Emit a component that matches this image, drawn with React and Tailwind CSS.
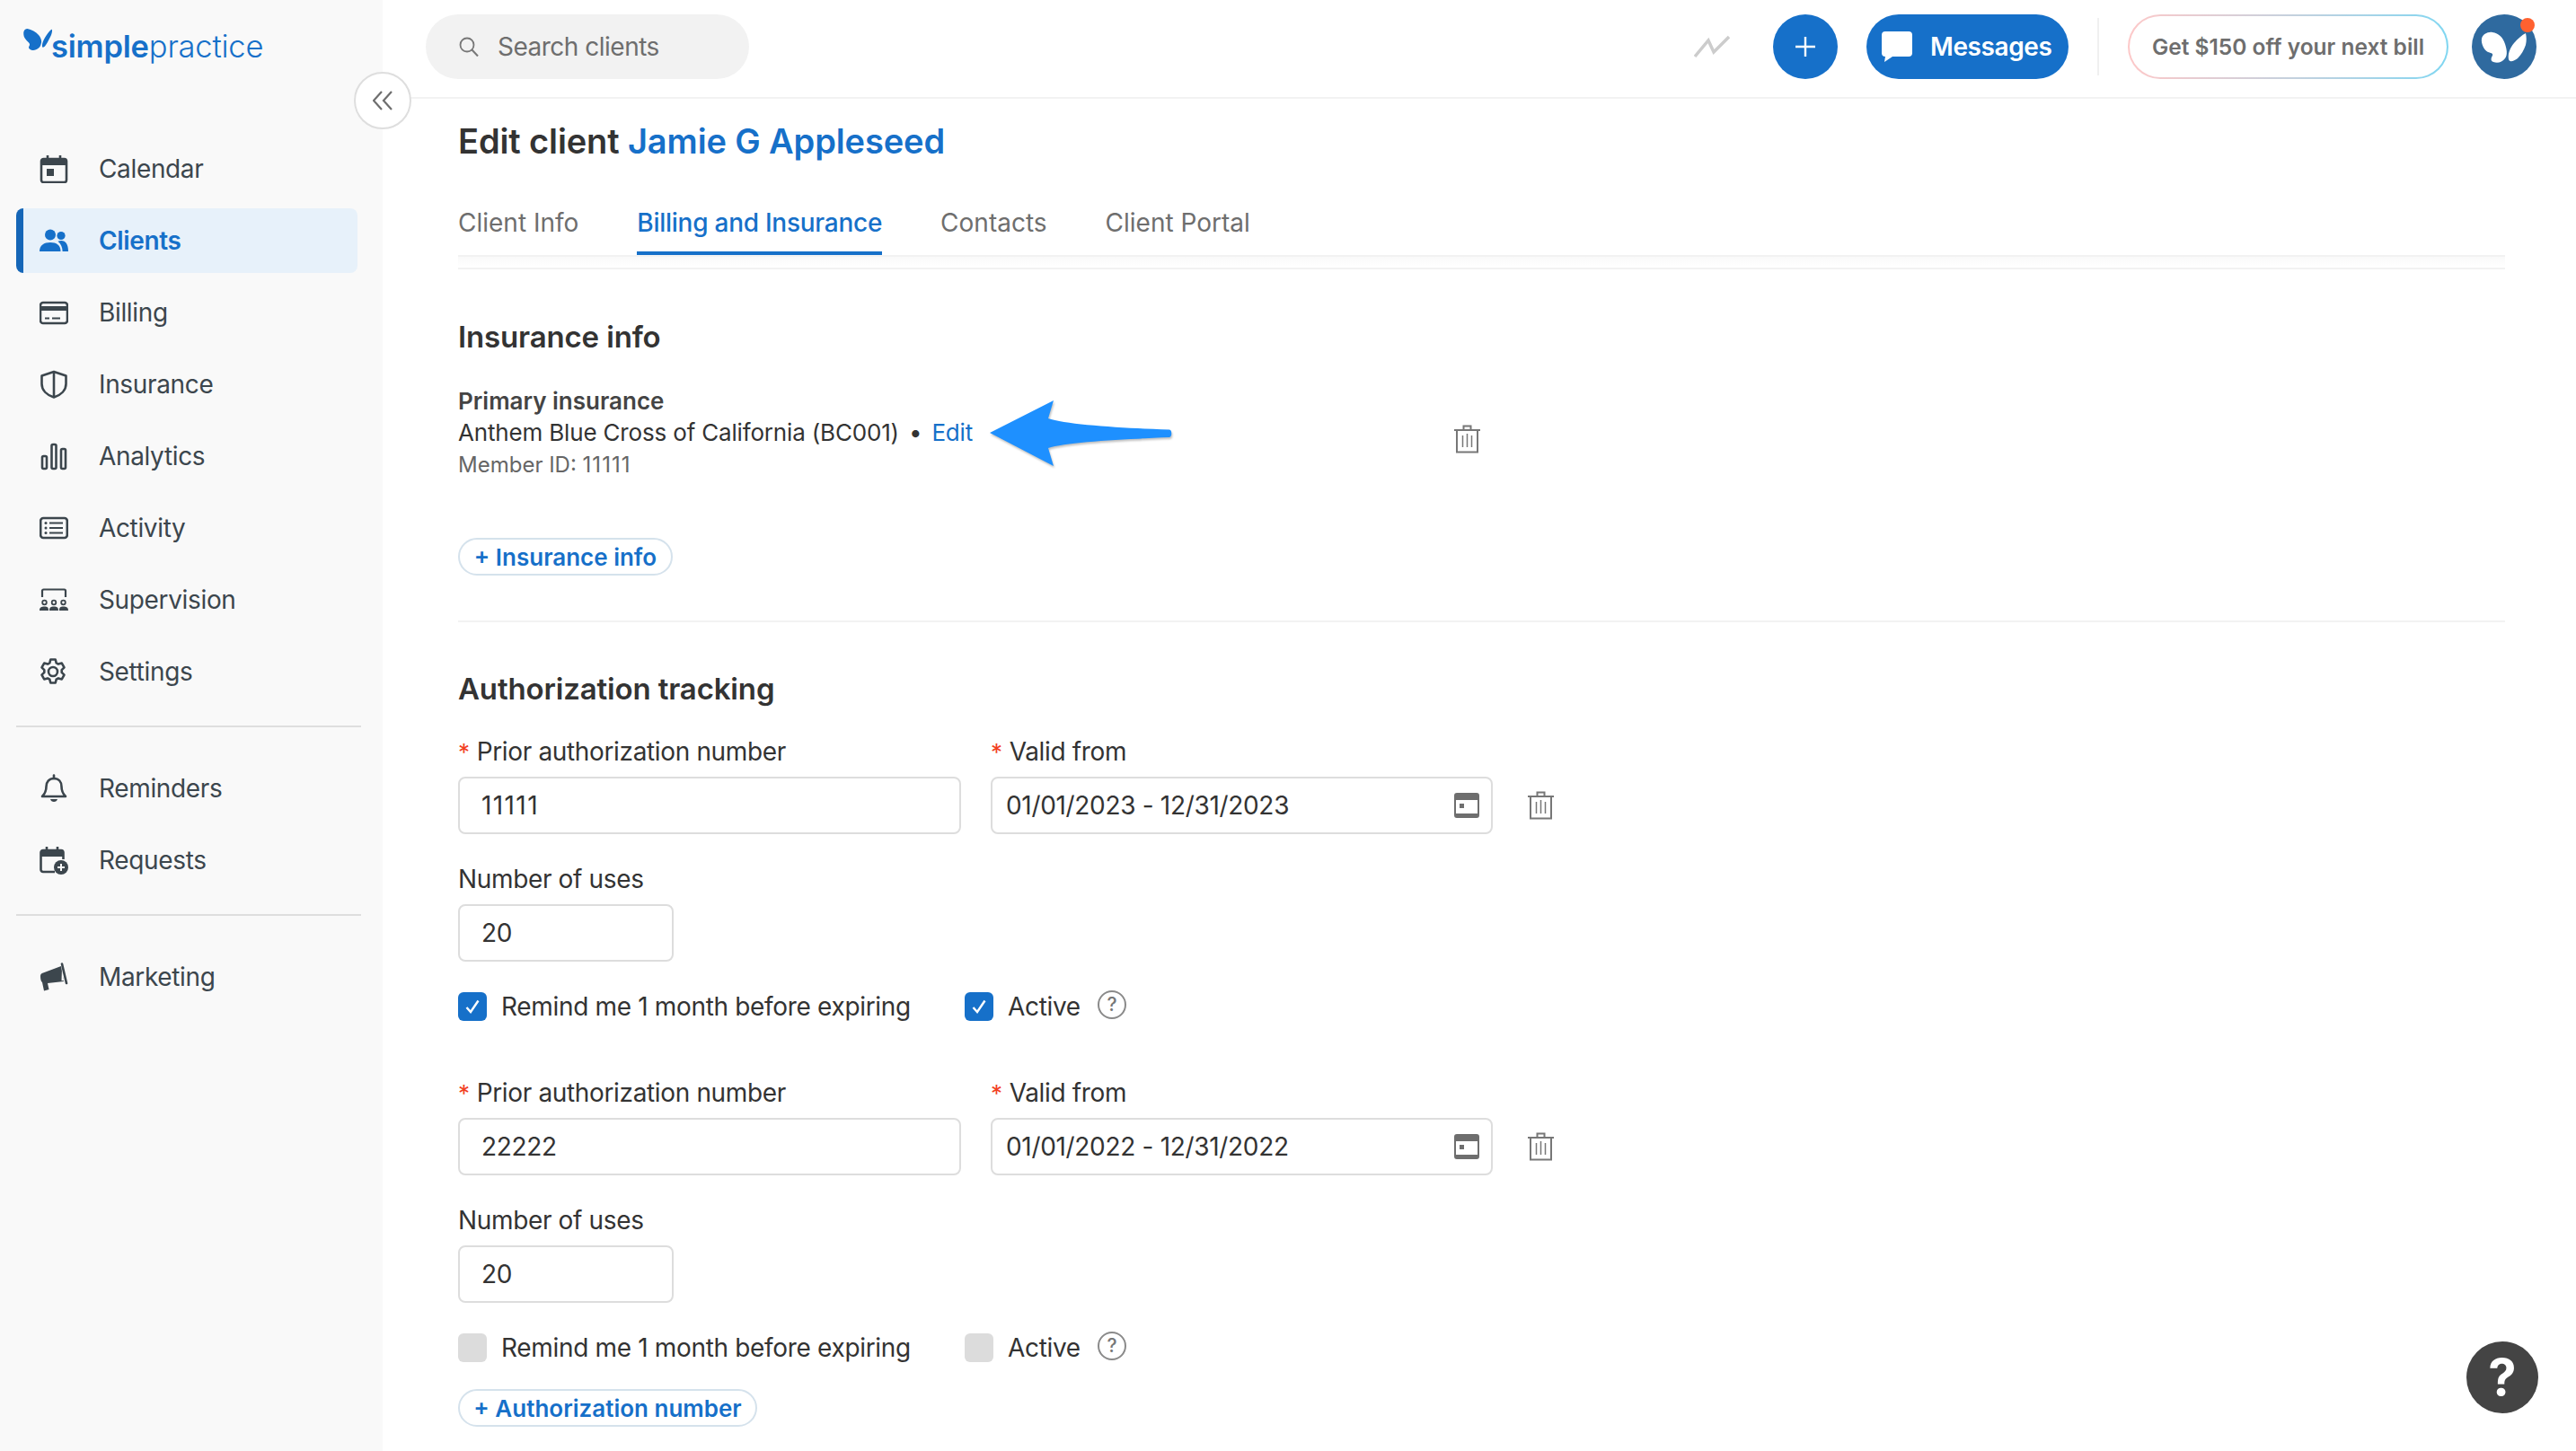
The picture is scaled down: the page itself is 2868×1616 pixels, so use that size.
import React from "react";

const Icon = ({ children, className = "w-8 h-8", vb = "0 0 32 32" }) => (
  <svg viewBox={vb} className={`${className} shrink-0`} fill="none" aria-hidden="true">
    {children}
  </svg>
);

const C = "currentColor";

const CalendarNav = () => (
  <Icon>
    <rect x="2" y="5" width="28" height="26" rx="2.5" stroke={C} strokeWidth="2.6" />
    <path d="M2 7.5a2.5 2.5 0 0 1 2.5-2.5h23A2.5 2.5 0 0 1 30 7.5V12H2z" fill={C} />
    <path d="M9 1v6M23 1v6" stroke={C} strokeWidth="2.6" />
    <rect x="8" y="16" width="8" height="8" fill={C} />
  </Icon>
);
const ClientsNav = () => (
  <Icon>
    <circle cx="12" cy="9.5" r="6" fill={C} />
    <circle cx="24" cy="10.5" r="4.6" fill={C} />
    <path d="M0 28c0-7 5-10 12-10s11.500 3 11.500 10z" fill={C} />
    <path d="M20.500 16.800c1.200-.5 2.400-.7 3.800-.7 4.700 0 7.700 4 7.700 11.900h-6.400c0-4.500-1.800-8.500-5.100-11.200z" fill={C} />
  </Icon>
);
const BillingNav = () => (
  <Icon>
    <rect x="1" y="5" width="30" height="23" rx="3" stroke={C} strokeWidth="2.600" />
    <rect x="1" y="9" width="30" height="5" fill={C} />
    <path d="M6 22.500h5M14 22.500h9" stroke={C} strokeWidth="2" />
  </Icon>
);
const ShieldNav = () => (
  <Icon>
    <path d="M16 2 29.500 6.500v9c0 7-5.500 12.500-13.500 15C8 28 2.500 22.500 2.500 15.500v-9z" stroke={C} strokeWidth="2.600" strokeLinejoin="round" />
    <path d="M16 2v28" stroke={C} strokeWidth="2.600" />
  </Icon>
);
const AnalyticsNav = () => (
  <Icon>
    <rect x="3" y="16" width="5" height="14" rx="1.500" stroke={C} strokeWidth="2.600" />
    <rect x="13.500" y="3" width="5" height="27" rx="1.500" stroke={C} strokeWidth="2.600" />
    <rect x="24" y="8" width="5" height="22" rx="1.500" stroke={C} strokeWidth="2.600" />
  </Icon>
);
const ActivityNav = () => (
  <Icon>
    <rect x="1.200" y="5" width="29.600" height="22" rx="3" stroke={C} strokeWidth="2.600" />
    <path d="M11 10.500h15M11 16h15M11 21.500h15" stroke={C} strokeWidth="2.200" />
    <circle cx="7" cy="10.500" r="1.500" fill={C} />
    <circle cx="7" cy="16" r="1.500" fill={C} />
    <circle cx="7" cy="21.500" r="1.500" fill={C} />
  </Icon>
);
const SupervisionNav = () => (
  <Icon>
    <path d="M3 13V6a1.500 1.500 0 0 1 1.500-1.500h23A1.500 1.500 0 0 1 29 6v7" stroke={C} strokeWidth="2.200" />
    <circle cx="5.500" cy="19" r="2.300" stroke={C} strokeWidth="1.800" />
    <circle cx="16" cy="19" r="2.300" stroke={C} strokeWidth="1.800" />
    <circle cx="26.500" cy="19" r="2.300" stroke={C} strokeWidth="1.800" />
    <path d="M0 28c0-3.500 2-4.500 5.500-4.500S10 24.500 10 28zM11 28c0-3.500 1.500-4.500 5-4.500s5 1 5 4.500zM22 28c0-3.500 1-4.500 4.500-4.500S32 24.500 32 28z" fill={C} />
  </Icon>
);
const SettingsNav = () => (
  <Icon>
    <path
      d="M12.800 2.500h5.400l1 3.800 2.300 1.300 3.800-1 2.700 4.700-2.800 2.800v2.800l2.800 2.800-2.700 4.700-3.800-1-2.300 1.300-1 3.800h-5.400l-1-3.800-2.300-1.300-3.800 1-2.700-4.700 2.800-2.800v-2.800l-2.800-2.800 2.700-4.700 3.800 1 2.300-1.300z"
      stroke={C}
      strokeWidth="2.600"
      strokeLinejoin="round"
      transform="translate(-.5 0)"
    />
    <circle cx="15" cy="16" r="5" stroke={C} strokeWidth="2.600" />
  </Icon>
);
const BellNav = () => (
  <Icon>
    <path d="M16 5c-5.500 0-8.500 4-8.500 9 0 5-1.500 8-4.500 11h26c-3-3-4.500-6-4.500-11 0-5-3-9-8.500-9z" stroke={C} strokeWidth="2.600" strokeLinejoin="round" />
    <path d="M16 1.500v3.500" stroke={C} strokeWidth="2.600" strokeLinecap="round" />
    <path d="M12 28h8c-.5 2-2 3-4 3s-3.500-1-4-3z" fill={C} />
  </Icon>
);
const RequestsNav = () => (
  <Icon>
    <path d="M17 29H4a2.500 2.500 0 0 1-2.500-2.500V7.500A2.500 2.500 0 0 1 4 5h20a2.500 2.500 0 0 1 2.500 2.500V15" stroke={C} strokeWidth="2.600" />
    <path d="M1.500 7.500A2.500 2.500 0 0 1 4 5h20a2.500 2.500 0 0 1 2.500 2.500V12h-25z" fill={C} />
    <path d="M8 1v5M20 1v5" stroke={C} strokeWidth="2.600" />
    <circle cx="24" cy="24" r="8" fill={C} />
    <path d="M24 20v8M20 24h8" stroke="#f9f9f9" strokeWidth="2" />
  </Icon>
);
const MarketingNav = () => (
  <Icon>
    <path d="M1 15c0-2 1-3 3-3.500L24 4l3 17-18 2 1.500 7-5.500 1.500L3 22c-1.500-1-2-4-2-7z" fill={C} />
    <path d="M25 6.500 27 20l-2.500.3z" fill="#f9f9f9" />
    <path d="M25 1.500 30 23" stroke={C} strokeWidth="2.600" strokeLinecap="round" />
  </Icon>
);

const Trash = ({ className = "" }) => (
  <svg viewBox="0 0 29 32" className={`w-[29px] h-[32px] shrink-0 text-[#777777] ${className}`} fill="none" aria-hidden="true">
    <path d="M0 6h29" stroke={C} strokeWidth="2" />
    <path d="M10.500 6V1.500h8V6" stroke={C} strokeWidth="2" />
    <path d="M3 6v24.500h23V6" stroke={C} strokeWidth="2" />
    <path d="M9.500 12v13M14.500 10v15M19.500 12v13" stroke={C} strokeWidth="1.500" />
  </svg>
);

const DateIcon = () => (
  <svg viewBox="0 0 28 28" className="w-[28px] h-[28px] shrink-0 text-[#6e6e6e]" fill="none" aria-hidden="true">
    <rect x="1" y="1" width="26" height="26" rx="2" stroke={C} strokeWidth="2" />
    <rect x="1" y="1" width="26" height="7" fill={C} />
    <rect x="6" y="12" width="5" height="5" fill={C} />
    <rect x="1" y="23" width="26" height="4" fill={C} />
  </svg>
);

const Check = ({ on }) => (
  <span className={`flex items-center justify-center w-8 h-8 rounded-[6px] ${on ? "bg-[#1670c9]" : "bg-[#dcdcdc]"}`}>
    {on && (
      <svg viewBox="0 0 20 20" className="w-5 h-5" fill="none" aria-hidden="true">
        <path d="m3.500 11 4.500 5L16.500 3.500" stroke="#ffffff" strokeWidth="2.400" />
      </svg>
    )}
  </span>
);

const Help = () => (
  <span className="flex items-center justify-center w-8 h-8 rounded-full border-2 border-[#8a8a8a] text-[#777777] text-[21px] font-medium leading-none">
    ?
  </span>
);

const nav1 = [
  ["Calendar", CalendarNav],
  ["Clients", ClientsNav, true],
  ["Billing", BillingNav],
  ["Insurance", ShieldNav],
  ["Analytics", AnalyticsNav],
  ["Activity", ActivityNav],
  ["Supervision", SupervisionNav],
  ["Settings", SettingsNav],
];
const nav2 = [
  ["Reminders", BellNav],
  ["Requests", RequestsNav],
];

const NavItem = ({ label, Ico, active }) => (
  <a
    className={`flex items-center h-[72px] w-[380px] gap-[34px] rounded-[8px] text-[28px] tracking-[-0.35px] ${
      active
        ? "bg-[#e7f1fa] text-[#1670c9] font-semibold border-l-8 border-[#1566b7] pl-[18px]"
        : "text-[#3c464d] pl-[26px]"
    }`}
  >
    <Ico />
    <span>{label}</span>
  </a>
);

const Sidebar = () => (
  <aside className="w-[426px] shrink-0 h-full bg-[#f9f9f9] flex flex-col pl-[18px] pr-[24px]">
    <div className="flex items-start h-[152px] pl-[8px] pt-[32px]">
      <svg viewBox="0 0 32 24" className="w-[32px] h-[24px] shrink-0 text-[#1670c9]" aria-hidden="true">
        <path d="M.5 3C1.500.8 2.500 0 4.500 0 9 .8 14 3.500 17 7c2.500 3 3.500 6 3 8.500-.5 3-1.500 5-3 6-1.800 1.500-4 2.500-6 2.500-2.500 0-5-1.500-5-3 0-1.500 1.300-2.500 1-4-.5-1.800-3-3-5-6C.5 9 -.2 5.500.5 3z" fill={C} />
        <path d="M21 20c-.5-3 1-6.500 3-10 2-3.500 4.500-7 7-9 1-.6 1.200.8 1 2-.5 3-1.500 5.500-3 8-1.500 3-3 6-5 8.500-1 1.200-2.700 1.600-3 .5z" fill={C} />
      </svg>
      <span className="text-[34.500px] leading-[44px] text-[#1670c9] tracking-[-0.2px] -ml-[1px] -mt-[2px]">
        <span className="font-semibold">simple</span>
        <span className="font-light">practice</span>
      </span>
    </div>
    <nav className="flex flex-col gap-[8px]">
      {nav1.map(([l, I, a]) => (
        <NavItem key={l} label={l} Ico={I} active={a} />
      ))}
    </nav>
    <div className="h-[2px] bg-[#dedede] mt-[24px] mb-[32px]" />
    <nav className="flex flex-col gap-[8px]">
      {nav2.map(([l, I]) => (
        <NavItem key={l} label={l} Ico={I} />
      ))}
    </nav>
    <div className="h-[2px] bg-[#dedede] mt-[24px] mb-[32px]" />
    <NavItem label="Marketing" Ico={MarketingNav} />
  </aside>
);

const TopBar = () => (
  <header className="h-[110px] shrink-0 border-b-2 border-[#f2f2f2] flex items-start pt-[16px] pl-[48px] pr-[44px]">
    <div className="flex items-center w-[360px] h-[72px] rounded-full bg-[#f2f2f2] pl-[37px] gap-[21px] text-[#6e6e6e] text-[28px] tracking-[-0.5px]">
      <svg viewBox="0 0 22 22" className="w-[22px] h-[22px] shrink-0" fill="none" aria-hidden="true">
        <circle cx="9" cy="9" r="7.500" stroke="#777777" strokeWidth="1.800" />
        <path d="m14.500 14.500 6.500 7" stroke="#777777" strokeWidth="2" />
      </svg>
      <span>Search clients</span>
    </div>
    <div className="ml-auto flex items-center h-[72px]">
      <svg viewBox="0 0 40 26" className="w-[40px] h-[26px] mr-[48px]" fill="none" aria-hidden="true">
        <path d="m1 24 15-18 6 13L39 2" stroke="#cccccc" strokeWidth="3.500" />
      </svg>
      <div className="flex items-center justify-center w-[72px] h-[72px] rounded-full bg-[#1670c9]">
        <svg viewBox="0 0 24 24" className="w-[24px] h-[24px]" fill="none" aria-hidden="true">
          <path d="M12 1v22M1 12h22" stroke="#ffffff" strokeWidth="2.400" />
        </svg>
      </div>
      <div className="flex items-center w-[225px] h-[72px] ml-[32px] rounded-full bg-[#1670c9] pl-[17px] gap-[20px] text-white font-semibold text-[28px] tracking-[-0.4px]">
        <svg viewBox="0 0 34 34" className="w-[34px] h-[34px] shrink-0" aria-hidden="true">
          <path d="M4 0h26a4 4 0 0 1 4 4v20a4 4 0 0 1-4 4H12l-9 6 1-6a4 4 0 0 1-4-4V4a4 4 0 0 1 4-4z" fill="#ffffff" />
        </svg>
        <span>Messages</span>
      </div>
      <div className="w-[2px] h-[64px] bg-[#f0f0f0] ml-[32px] mr-[32px]" />
      <div className="w-[357px] h-[72px] rounded-full p-[2px] bg-gradient-to-r from-[#fdc8c8] to-[#7fd6f1]">
        <div className="flex items-center justify-center w-full h-full rounded-full bg-white text-[#6e6e6e] font-semibold text-[24.500px]">
          Get $150 off your next bill
        </div>
      </div>
      <div className="relative w-[72px] h-[72px] ml-[26px] rounded-full bg-[#2f6a9f] shrink-0">
        <svg viewBox="0 0 72 72" className="w-[72px] h-[72px]" aria-hidden="true">
          <path d="M11 27c1-5 7-8 12-7 7 1 12 6 14 13 2 6 3 12 0 16-3 4-8 6-13 4-3-1-3-4-1-7 1-3-2-3-5-4-4-2-8-9-7-15z" fill="#ffffff" />
          <path d="M41 50c-1-6 1-12 6-18 4-5 9-9 13-11 1 4 1 9 0 13-2 6-5 11-9 15-4 3-9 5-10 1z" fill="#ffffff" />
        </svg>
        <span className="absolute right-[2px] top-[4px] w-4 h-4 rounded-full bg-[#ff6130]" />
      </div>
    </div>
  </header>
);

const Label = ({ children, req }) => (
  <div className="h-[34px] leading-[34px] text-[28px] text-[#333333] tracking-[-0.35px]">
    {req && <span className="text-[#f2401f] mr-[8px] text-[26px]">*</span>}
    {children}
  </div>
);

const TextInput = ({ value, className = "w-[560px]", spacing = "tracking-[-0.35px]" }) => (
  <input
    readOnly
    value={value}
    className={`${className} ${spacing} h-[64px] mt-[11px] block rounded-[8px] border-2 border-[#dddddd] bg-white pl-[24px] text-[28px] text-[#333333] outline-none`}
  />
);

const AuthBlock = ({ num, range, on, numSpacing }) => (
  <div className="flex flex-col">
    <div className="flex items-end">
      <div className="w-[560px]">
        <Label req>Prior authorization number</Label>
        <TextInput value={num} spacing={numSpacing} />
      </div>
      <div className="w-[559px] ml-[33px]">
        <Label req>Valid from</Label>
        <div className="flex items-center justify-between h-[64px] mt-[11px] rounded-[8px] border-2 border-[#dddddd] pl-[15px] pr-[13px] text-[28px] text-[#333333] tracking-[-0.32px]">
          <span>{range}</span>
          <DateIcon />
        </div>
      </div>
      <div className="h-[64px] flex items-center ml-[39px]">
        <Trash />
      </div>
    </div>
    <div className="mt-[33px]">
      <Label>Number of uses</Label>
      <TextInput value="20" className="w-[240px]" />
    </div>
    <div className="flex items-center mt-[34px] h-[32px] text-[28px] text-[#333333] tracking-[-0.33px]">
      <Check on={on} />
      <span className="ml-[16px] w-[516px]">Remind me 1 month before expiring</span>
      <Check on={on} />
      <span className="ml-[16px]">Active</span>
      <span className="ml-[19px] -mt-[5px]">
        <Help />
      </span>
    </div>
  </div>
);

const PillButton = ({ children, className }) => (
  <button className={`flex items-center justify-center h-[42px] rounded-full border-2 border-[#d5e2ec] bg-white text-[#1670c9] font-semibold text-[26px] ${className}`}>
    {children}
  </button>
);

const Arrow = () => (
  <svg viewBox="0 0 204 76" className="w-[204px] h-[76px] -my-[20px] ml-[19px] shrink-0" aria-hidden="true" style={{ filter: "drop-shadow(1px 2px 1px rgba(0,0,0,.25))" }}>
    <path
      d="M0 38 71 2 65 22C85 29 150 33 200 34.500c3 .2 3 8 0 8.500-50 2-115 5-135 12l6 20z"
      fill="#1e90ff"
    />
  </svg>
);

const Content = () => (
  <main className="flex-1 pl-[84px] pr-[79px] flex flex-col">
    <h1 className="mt-[23px] h-[48px] leading-[48px] text-[38px] font-semibold text-[#333333] tracking-[-0.12px]">
      Edit client <span className="text-[#1670c9]">Jamie G Appleseed</span>
    </h1>
    <div className="mt-[33px] flex gap-[65px] border-b-2 border-[#f2f2f2] h-[72px] text-[28px] text-[#6e6e6e]">
      <a className="h-[70px] leading-[68px]">Client Info</a>
      <a className="h-[70px] leading-[68px] border-b-4 border-[#1670c9] text-[#1670c9] font-medium tracking-[-0.26px]">Billing and Insurance</a>
      <a className="h-[70px] leading-[68px]">Contacts</a>
      <a className="h-[70px] leading-[68px]">Client Portal</a>
    </div>
    <div className="h-[14px] border-b-2 border-[#f2f2f2] bg-gradient-to-b from-[#f9f9f9] to-white" />

    <h2 className="mt-[53px] h-[44px] leading-[44px] text-[33px] font-semibold text-[#333333] tracking-[-0.15px]">Insurance info</h2>
    <div className="mt-[32px] flex items-center">
      <div className="w-[1109px] flex flex-col">
        <div className="h-[35px] leading-[35px] text-[26px] font-semibold text-[#444444]">Primary insurance</div>
        <div className="h-[35px] leading-[35px] text-[26px] text-[#333333] flex items-center tracking-[-0.17px]">
          <span>Anthem Blue Cross of California (BC001)</span>
          <span className="mx-[11px]">•</span>
          <span className="text-[#1670c9]">Edit</span>
          <Arrow />
        </div>
        <div className="h-[37px] leading-[37px] text-[24px] text-[#666666]">
          Member ID: <span className="tracking-[1px]">11111</span>
        </div>
      </div>
      <Trash className="mt-[12px]" />
    </div>
    <PillButton className="mt-[63px] w-[239px]">+ Insurance info</PillButton>
    <div className="mt-[50px] h-[2px] bg-[#f2f2f2]" />

    <h2 className="mt-[52px] h-[44px] leading-[44px] text-[33px] font-semibold text-[#333333] tracking-[-0.15px]">Authorization tracking</h2>
    <div className="mt-[31px]">
      <AuthBlock num="11111" numSpacing="tracking-[1.4px]" range="01/01/2023 - 12/31/2023" on />
    </div>
    <div className="mt-[63px]">
      <AuthBlock num="22222" numSpacing="tracking-[-0.35px]" range="01/01/2022 - 12/31/2022" />
    </div>
    <PillButton className="mt-[30px] w-[333px]">+ Authorization number</PillButton>
  </main>
);

export default function App() {
  return (
    <div className="relative flex w-full h-screen overflow-hidden bg-white font-[Inter,sans-serif]">
      <Sidebar />
      <div className="flex-1 min-w-0 flex flex-col">
        <TopBar />
        <Content />
      </div>
      <button className="absolute left-[394px] top-[80px] flex items-center justify-center w-[64px] h-[64px] rounded-full border-2 border-[#dedede] bg-white" aria-label="Collapse">
        <svg viewBox="0 0 22 22" className="w-[22px] h-[22px]" fill="none" aria-hidden="true">
          <path d="M10 1 1 11l9 10M21 1l-9 10 9 10" stroke="#6e6e6e" strokeWidth="2.200" />
        </svg>
      </button>
      <div className="absolute left-[2746px] top-[1494px] flex items-center justify-center w-20 h-20 rounded-full bg-[#444444] text-white text-[56px] font-bold">
        ?
      </div>
    </div>
  );
}
